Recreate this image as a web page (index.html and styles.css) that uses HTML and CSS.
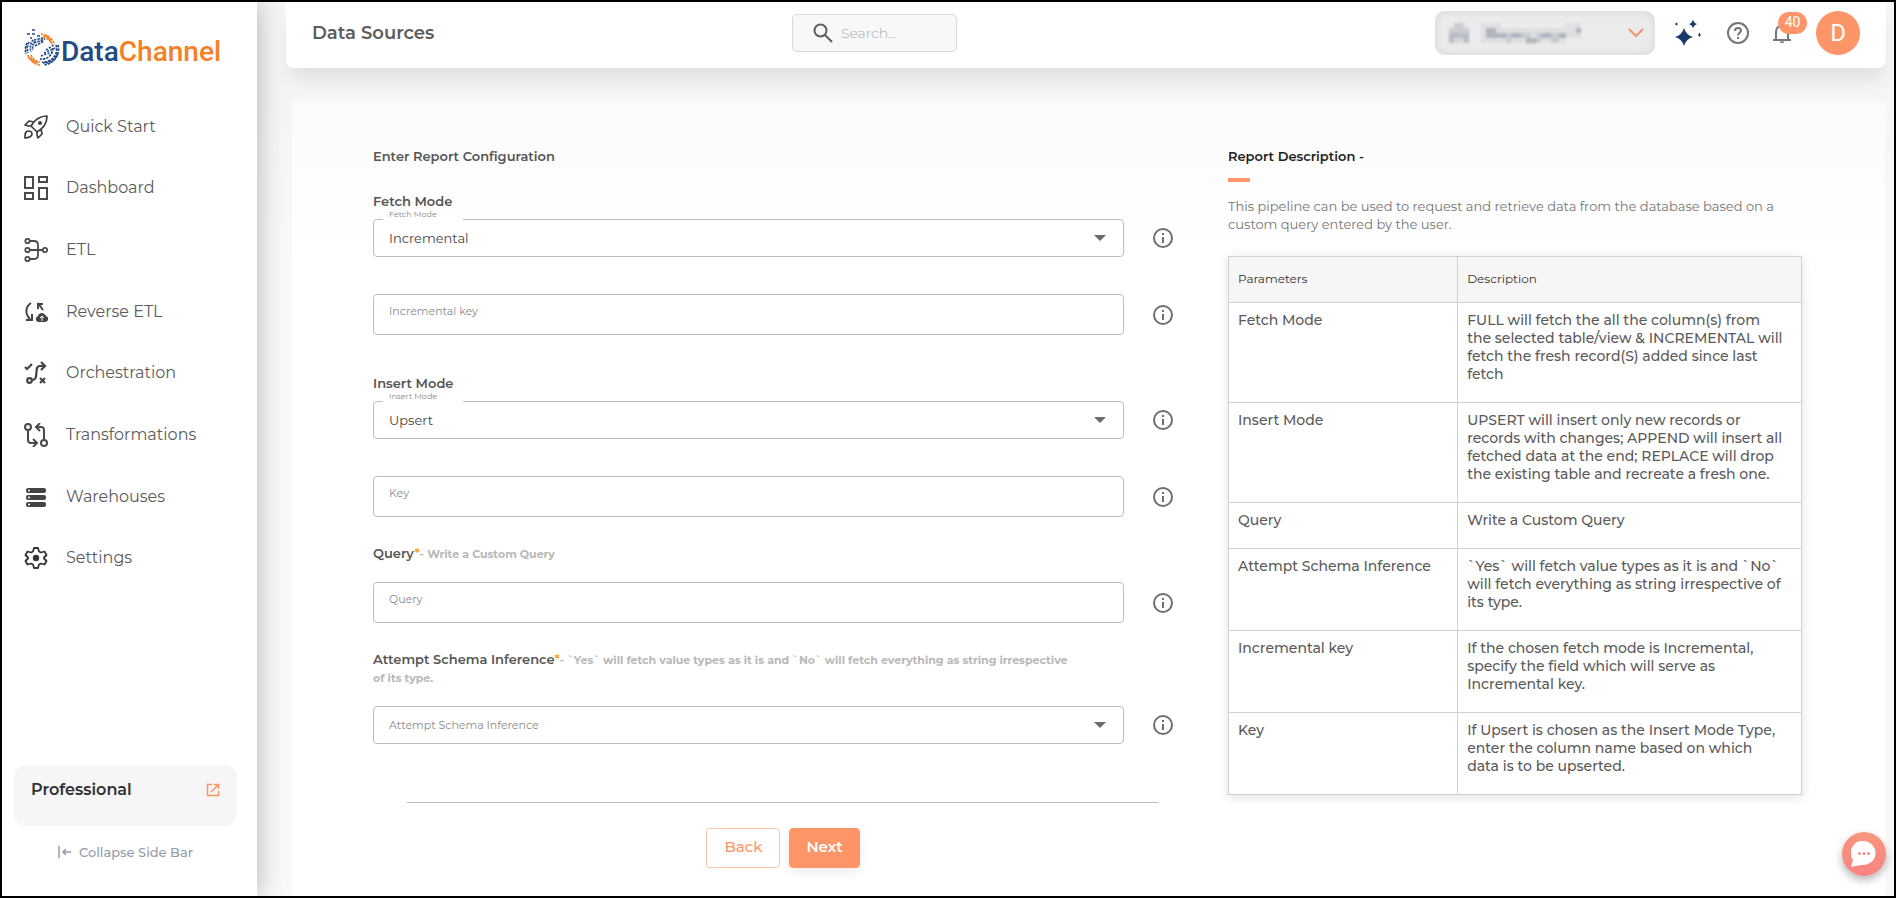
FILE: index.html
```html
<!DOCTYPE html>
<html lang="en">
<head>
<meta charset="utf-8">
<title>DataChannel - Data Sources</title>
<link rel="stylesheet" href="styles.css">
</head>
<body>
<svg class="sprite" aria-hidden="true">
  <symbol id="info" viewBox="0 0 24 24"><path fill="currentColor" d="M11 7h2v2h-2zm0 4h2v6h-2zm1-9a10 10 0 1 0 0 20 10 10 0 0 0 0-20zm0 18a8 8 0 1 1 0-16 8 8 0 0 1 0 16z"/></symbol>
  <symbol id="caret" viewBox="0 0 12 6"><path fill="currentColor" d="M0 0h12L6 6z"/></symbol>
</svg>
<div class="app">
  <aside class="sidebar">
    <a class="logo" href="#" aria-label="DataChannel">
      <svg class="logo-mark" viewBox="0 0 36 40" fill="none">
        <g stroke="#234a86" stroke-width="1.700">
          <path stroke-dasharray="2.500 1" d="M3 15a16 16 0 0 0-1 11M5 14a14 14 0 0 0-1 11"/>
          <path stroke-dasharray="2 1" d="M9 12a13 13 0 0 0-2 12M11 13a10 10 0 0 0-2 9"/>
          <path stroke-dasharray="2.500 1" d="M10 12l9-2M10 15l11-4M11 18l9-5"/>
          <path stroke-dasharray="2.500 1" d="M34 17a16 16 0 0 1-14 20M32 17a13 13 0 0 1-14 17M29 20a11 11 0 0 1-13 11M34 25a15 15 0 0 1-15 10"/>
          <path stroke-dasharray="2 1.500" d="M22 22l9-6M20 25l11-5M17 28l11-4"/>
          <path d="M8 2h3M3 6h3M8 6h3M6 10h2M13 8h3"/>
        </g>
        <g stroke="#f58025" stroke-width="1.700">
          <path stroke-dasharray="2.500 1" d="M17 6a16 16 0 0 1 13 9M19 9a13 13 0 0 1 9 7M22 7l6 9M20 7l8 6"/>
          <path stroke-dasharray="2.500 1" d="M4 27a14 14 0 0 0 12 10M7 27a11 11 0 0 0 9 7M6 30l8 5M4 29l7 6"/>
        </g>
      </svg>
      <span class="logo-text">Data<span class="logo-accent">Channel</span></span>
    </a>
    <nav class="nav">
      <a href="#"><svg viewBox="0 0 24 24" fill="none" stroke="#3d3d3d" stroke-width="1.7" stroke-linejoin="round"><path d="M23 1C16 1 11 4 7 11l6 6c7-4 10-9 10-16zM7 11l-3 0-3-1 4-4 5 1M13 17l0 3 1 3 4-4-1-5M1 23c0-4 0-7 3-7s4 1 4 3-3 4-7 4z"/><circle cx="16" cy="8" r="2" fill="#3d3d3d" stroke="none"/></svg>Quick Start</a>
      <a href="#"><svg viewBox="0 0 24 24" fill="none" stroke="#4a4a4a" stroke-width="2"><path d="M1 1h8v11H1zM15 1h8v5h-8zM15 12h8v11h-8zM1 17h8v6H1z"/></svg>Dashboard</a>
      <a href="#"><svg viewBox="0 0 24 24" fill="none" stroke="#4a4a4a" stroke-width="1.8"><circle cx="3.5" cy="3" r="2.2"/><circle cx="3.5" cy="12" r="2.2"/><circle cx="3.5" cy="21" r="2.2"/><circle cx="21" cy="12" r="2.2"/><path d="M6 3h4q4 0 4 4v10q0 4-4 4H6M6 12h13"/></svg>ETL</a>
      <a href="#"><svg viewBox="0 0 24 24" fill="none" stroke="#444" stroke-width="2"><path d="M7 3C1 7 1 14 6 19M2 20h6v-6M14 9V4h5M14 3l5 7"/><path fill="#444" stroke="none" d="M15 22a3 3 0 0 1-3-4q1-2 2-2c1-4 6-4 8 0q3 1 2 4-1 2-3 2z"/><path stroke="#fff" stroke-width="1" d="M18 21v-5M16 18l2-2 2 2"/></svg>Reverse ETL</a>
      <a href="#"><svg viewBox="0 0 24 24" fill="none" stroke="#444" stroke-width="2.2"><path d="M1 6l2 2 5-5M8 19c8 0 1-14 8-14h4M17 1l4 4-4 4M16 17l5 5M21 17l-5 5"/><circle cx="5.500" cy="19.500" r="2.300"/></svg>Orchestration</a>
      <a href="#"><svg viewBox="0 0 24 24" fill="none" stroke="#4a4a4a" stroke-width="2"><circle cx="4" cy="4" r="3"/><circle cx="20" cy="20" r="3"/><path d="M4 7v10q0 3 3 3h6M9 16l4 4-4 4M20 17V7q0-3-3-3h-5M16 0l-4 4 4 4"/></svg>Transformations</a>
      <a href="#"><svg viewBox="0 0 24 24"><g fill="#444"><rect x="2" y="3" width="20" height="5" rx="2"/><rect x="2" y="10" width="20" height="5" rx="2"/><rect x="2" y="17" width="20" height="5" rx="2"/></g><g fill="#fff"><circle cx="5" cy="5.500" r="1"/><circle cx="5" cy="12.500" r="1"/><circle cx="5" cy="19.500" r="1"/></g></svg>Warehouses</a>
      <a href="#"><svg viewBox="0 0 24 24" fill="none" stroke="#333" stroke-width="1.8" stroke-linejoin="round"><path d="M10 2h4l1 3.500 2 1 3.500-1 2 3.500-2.500 2.500v1l2.500 2.500-2 3.500-3.500-1-2 1-1 3.500h-4l-1-3.500-2-1-3.500 1-2-3.500L4 12.500v-1L1.500 9l2-3.500 3.500 1 2-1z"/><circle cx="12" cy="12" r="3.200" fill="#333" stroke="none"/></svg>Settings</a>
    </nav>
    <div class="sidebar-foot">
      <a class="plan" href="#"><span>Professional</span>
        <svg viewBox="0 0 14 14" fill="none" stroke="#fe9568" stroke-width="1.5"><path d="M6 1.500H1.500v11h11V8M8 1.500h4.500V6M12 2L5 9"/></svg></a>
      <button class="collapse" type="button">
        <svg viewBox="0 0 14 14" fill="none" stroke="#949dab" stroke-width="1.500"><path d="M1 1v12M13 7H5M8 4L5 7l3 3"/></svg>Collapse Side Bar</button>
    </div>
  </aside>

  <main class="main">
    <header class="topbar">
      <h1>Data Sources</h1>
      <label class="search">
        <svg viewBox="0 0 20 20" fill="none" stroke="#5c5c5c" stroke-width="2"><circle cx="7.500" cy="7.500" r="6"/><path d="M12 12l7 7"/></svg>
        <input type="search" placeholder="Search..." aria-label="Search">
      </label>
      <div class="tools">
        <button class="workspace" type="button" aria-label="Workspace">
          <svg class="mosaic" viewBox="0 -2 136 24" aria-hidden="true">
            <g fill="#c9cdd2"><rect x="5" width="10" height="5"/><rect y="5" width="20" height="15"/></g>
            <g fill="#b8bec7"><rect y="10" width="5" height="10"/><rect x="15" y="10" width="5" height="10"/><rect x="5" y="10" width="10" height="5"/></g>
            <rect x="5" y="15" width="10" height="5" fill="#d5d8dd"/>
            <g fill="#dfe0e2"><rect x="32" width="20" height="20"/><rect x="52" y="5" width="65" height="15"/><rect x="117" y="0" width="15" height="15"/><rect x="77" y="20" width="10" height="4"/></g>
            <g fill="#b0b5be"><rect x="37" y="5" width="10" height="10"/><rect x="47" y="10" width="10" height="5"/><rect x="62" y="10" width="10" height="5"/><rect x="77" y="15" width="10" height="5"/><rect x="92" y="10" width="10" height="5"/><rect x="110" y="10" width="7" height="5"/><rect x="127" y="5" width="5" height="5"/></g>
            <g fill="#c8cbd1"><rect x="57" y="10" width="5" height="10"/><rect x="72" y="10" width="10" height="5"/><rect x="87" y="10" width="5" height="10"/><rect x="102" y="10" width="8" height="10"/></g>
          </svg>
          <svg class="chevron" viewBox="0 0 16 10" fill="none" stroke="#f6926b" stroke-width="2"><path d="M1 1l7 7 7-7"/></svg>
        </button>
        <button class="icon-btn sparkle" type="button" aria-label="Assistant">
          <svg viewBox="0 0 26 26" fill="#153a6b"><path d="M9 8q2 7 9 9-7 2-9 9-2-7-9-9 7-2 9-9zM18 0q1 3 4 4-3 1-4 4-1-3-4-4 3-1 4-4zM24.500 12.500l.8 1.700.7.800-.7.700-.8 1.300-.8-1.300-.7-.7.700-.8zM1.500 2.500L3 4 1.500 5.500 0 4z"/></svg></button>
        <button class="icon-btn help" type="button" aria-label="Help">
          <svg viewBox="0 0 22 22" fill="none" stroke="#757575" stroke-width="2"><circle cx="11" cy="11" r="10"/><path d="M8 9q0-3 3-3t3 2.500c0 2-3 2.500-3 5M11 15v2"/></svg></button>
        <button class="icon-btn bell" type="button" aria-label="Notifications">
          <svg viewBox="0 0 18 20" fill="none" stroke="#757575" stroke-width="2"><path d="M0 17h18M3 17V9c0-4 2-6 6-6s6 2 6 6v8M9 3V0"/><path fill="#757575" stroke="none" d="M7 18.500h4a2 2 0 0 1-4 0z"/></svg>
          <span class="badge">40</span></button>
        <button class="avatar" type="button">D</button>
      </div>
    </header>

    <section class="panel">
      <form class="form">
        <h2>Enter Report Configuration</h2>

        <label class="title" for="fetch">Fetch Mode</label>
        <div class="row after-title">
          <div class="field"><span class="float">Fetch Mode</span>
            <select id="fetch"><option>Incremental</option><option>Full</option></select>
            <svg class="caret"><use href="#caret"/></svg></div>
          <svg class="info"><use href="#info"/></svg>
        </div>
        <div class="row stacked">
          <div class="field"><input type="text" placeholder="Incremental key" aria-label="Incremental key"></div>
          <svg class="info"><use href="#info"/></svg>
        </div>

        <label class="title group" for="insert">Insert Mode</label>
        <div class="row after-title">
          <div class="field"><span class="float">Insert Mode</span>
            <select id="insert"><option>Upsert</option><option>Append</option><option>Replace</option></select>
            <svg class="caret"><use href="#caret"/></svg></div>
          <svg class="info"><use href="#info"/></svg>
        </div>
        <div class="row stacked">
          <div class="field"><input type="text" placeholder="Key" aria-label="Key"></div>
          <svg class="info"><use href="#info"/></svg>
        </div>

        <label class="title" for="query">Query<b class="req">*</b><span class="hint">- Write a Custom Query</span></label>
        <div class="row after-hint">
          <div class="field"><input id="query" type="text" placeholder="Query"></div>
          <svg class="info"><use href="#info"/></svg>
        </div>

        <label class="title" for="schema">Attempt Schema Inference<b class="req">*</b><span class="hint">- `Yes` will fetch value types as it is and `No` will fetch everything as string irrespective<br>of its type.</span></label>
        <div class="row after-hint">
          <div class="field">
            <select id="schema" class="empty"><option>Attempt Schema Inference</option><option>Yes</option><option>No</option></select>
            <svg class="caret"><use href="#caret"/></svg></div>
          <svg class="info"><use href="#info"/></svg>
        </div>

        <div class="actions">
          <button class="btn" type="button">Back</button>
          <button class="btn primary" type="submit">Next</button>
        </div>
      </form>

      <aside class="desc">
        <h2>Report Description -</h2>
        <p>This pipeline can be used to request and retrieve data from the database based on a custom query entered by the user.</p>
        <table>
          <thead><tr><th>Parameters</th><th>Description</th></tr></thead>
          <tbody>
            <tr><td>Fetch Mode</td><td>FULL will fetch the all the column(s) from<br>the selected table/view &amp; INCREMENTAL will<br>fetch the fresh record(S) added since last<br>fetch</td></tr>
            <tr><td>Insert Mode</td><td>UPSERT will insert only new records or<br>records with changes; APPEND will insert all<br>fetched data at the end; REPLACE will drop<br>the existing table and recreate a fresh one.</td></tr>
            <tr><td>Query</td><td>Write a Custom Query</td></tr>
            <tr><td>Attempt Schema Inference</td><td>`Yes` will fetch value types as it is and `No`<br>will fetch everything as string irrespective of<br>its type.</td></tr>
            <tr><td>Incremental key</td><td>If the chosen fetch mode is Incremental,<br>specify the field which will serve as<br>Incremental key.</td></tr>
            <tr><td>Key</td><td>If Upsert is chosen as the Insert Mode Type,<br>enter the column name based on which<br>data is to be upserted.</td></tr>
          </tbody>
        </table>
      </aside>
    </section>
  </main>
</div>
<button class="chat" type="button" aria-label="Open chat">
  <svg viewBox="0 0 26 26"><path fill="#fff" d="M13 0a13 12 0 1 1-3 24l-10 2 2-7A12 12 0 0 1 13 0z"/><g fill="#fa8c7a"><circle cx="8.500" cy="12.500" r="1.500"/><circle cx="13" cy="12.500" r="1.500"/><circle cx="17.500" cy="12.500" r="1.500"/></g></svg>
</button>
</body>
</html>
```
FILE: styles.css
```css
* { box-sizing: border-box; }

body {
  margin: 0;
  font-family: "Montserrat", "Inter", sans-serif;
  font-size: 14px;
  line-height: 18px;
  color: #555;
}

button, input, select { font: inherit; color: inherit; }
button { cursor: pointer; padding: 0; border: 0; background: none; }
a { color: inherit; text-decoration: none; }
h1, h2, p { margin: 0; }
svg { display: block; flex: none; }
.sprite { position: absolute; width: 0; height: 0; }

.app {
  display: grid;
  grid-template-columns: 255px 1fr;
  min-height: 100vh;
  border: 2px solid #000;
  background: linear-gradient(#f6f6f7 100px, #f9f9f9 260px);
}

/* Sidebar */
.sidebar {
  display: flex;
  flex-direction: column;
  background: #fff;
  box-shadow: 2px 0 24px rgba(60, 66, 78, .34);
  clip-path: inset(0 -40px 0 0);
}
.logo { display: flex; gap: 1px; padding: 26px 0 0 22px; }
.logo-mark { width: 36px; height: 40px; }
.logo-text {
  padding-top: 6px;
  font: 500 28px/36px Roboto, sans-serif;
  color: #234a86;
}
.logo-accent { color: #f58025; }
.nav {
  display: grid;
  grid-auto-rows: 1fr;
  height: 493px;
  margin-top: 26px;
  padding-left: 22px;
}
.nav a {
  display: flex;
  align-items: center;
  gap: 18px;
  font-size: 16px;
  color: #5c5c5c;
}
.nav svg { width: 24px; height: 24px; }
.sidebar-foot { margin-top: auto; padding: 0 20px 34px 12px; }
.plan {
  display: flex;
  justify-content: space-between;
  height: 61px;
  padding: 16px 17px;
  border-radius: 12px;
  background: #f6f6f6;
  font-size: 16px;
  font-weight: 600;
  color: #303030;
}
.plan svg { width: 14px; height: 14px; margin-top: 2px; }
.collapse {
  display: flex;
  align-items: center;
  gap: 7px;
  margin: 17px auto 0;
  padding-bottom: 1px;
  font-size: 13px;
  font-weight: 500;
  color: #949dab;
}
.collapse svg { width: 14px; height: 14px; }

/* Top bar */
.main {
  display: flex;
  flex-direction: column;
  padding: 0 8px 0 29px;
}
.topbar {
  display: grid;
  grid-template-columns: 31% 165px 1fr;
  align-items: start;
  height: 66px;
  padding: 9px 26px 0;
  margin-bottom: 33px;
  border-radius: 0 0 8px 8px;
  background: #fff;
  box-shadow: 0 16px 18px -4px rgba(100, 90, 75, .14);
}
.topbar h1 { padding-top: 13px; font-size: 18px; font-weight: 600; color: #5c5c5c; }
.search {
  display: flex;
  align-items: center;
  gap: 8px;
  height: 38px;
  margin-top: 3px;
  padding-left: 20px;
  border: 1px solid #d9d9d9;
  border-radius: 5px;
  background: #f8f8f8;
}
.search svg { width: 20px; height: 20px; }
.search input {
  width: 100%;
  min-width: 0;
  padding: 0;
  border: 0;
  outline: 0;
  background: none;
  font-size: 14px;
  font-weight: 300;
}
.search input::placeholder { color: #aaa; }
.tools { display: flex; justify-content: flex-end; align-items: center; height: 44px; }
.workspace {
  display: flex;
  align-items: center;
  justify-content: space-between;
  width: 220px;
  height: 44px;
  padding: 0 11px 0 14px;
  border-radius: 10px;
  background: #ebebeb;
  box-shadow: inset 0 0 10px rgba(0, 0, 0, .09);
}
.mosaic { width: 136px; height: 24px; filter: blur(1px); }
.chevron { width: 16px; height: 10px; }
.sparkle { margin-left: 20px; }
.sparkle svg { width: 26px; height: 26px; }
.help { margin-left: 26px; }
.help svg { width: 22px; height: 22px; }
.bell { position: relative; margin: 0 25px 0 24px; }
.bell svg { width: 18px; height: 20px; }
.badge {
  position: absolute;
  left: 5px;
  top: -11px;
  width: 29px;
  height: 22px;
  border-radius: 11px;
  background: #fe9568;
  font: 14px/20px Roboto, sans-serif;
  color: #fff;
}
.avatar {
  width: 44px;
  height: 44px;
  border-radius: 50%;
  background: #fe9568;
  font: 24px/44px Roboto, sans-serif;
  color: #fff;
}

/* Panel */
.panel {
  flex: 1;
  display: grid;
  grid-template-columns: 800fr 574fr;
  gap: 55px;
  margin: 0 1px 0 6px;
  padding: 46px 83px 28px 81px;
  background: linear-gradient(#fbfbfb, #fff 160px);
}
.form { display: flex; flex-direction: column; }
h2 { font-size: 13px; line-height: 18px; font-weight: 600; }
.title { margin-top: 27px; font-size: 13px; font-weight: 600; }
.title.group { margin-top: 39px; }
.hint { font-size: 11px; line-height: 14px; font-weight: 700; color: #b8b8b8; }
.req { color: #f7a23c; font-weight: 600; }
.row {
  display: grid;
  grid-template-columns: 1fr 21px;
  align-items: center;
  gap: 28px;
}
.after-title { margin-top: 9px; }
.stacked { margin-top: 37px; }
.after-hint { margin-top: 20px; }
.field { position: relative; }
.field select, .field input {
  display: block;
  width: 100%;
  height: 38px;
  padding: 0 15px;
  border: 1px solid #bdbdbd;
  border-radius: 4px;
  outline: 0;
  appearance: none;
  background: #fff;
  font-size: 13px;
  color: #444;
}
.field input { height: 41px; padding-bottom: 7px; font-size: 11px; }
.field input::placeholder { color: #8a8a8a; }
.field select.empty { font-size: 11px; color: #8a8a8a; }
.caret {
  position: absolute;
  right: 18px;
  top: 16px;
  width: 12px;
  height: 6px;
  color: #6b6b6b;
  pointer-events: none;
}
.float {
  position: absolute;
  left: 10px;
  top: -10px;
  width: 80px;
  padding-left: 6px;
  background: linear-gradient(transparent 9px, #fff 9px);
  font-size: 8px;
  line-height: 11px;
  color: #888;
}
.info { justify-self: center; width: 24px; height: 24px; color: #6e6e6e; }
.actions {
  display: flex;
  justify-content: center;
  gap: 9px;
  margin: 58px 14px 0 34px;
  padding-top: 25px;
  border-top: 1px solid #bdbdbd;
}
.btn {
  height: 40px;
  padding: 0 17px 2px;
  border: 1px solid #fec5ad;
  border-radius: 4px;
  font-size: 15px;
  font-weight: 500;
  color: #fe9568;
}
.btn.primary {
  padding: 0 16px 2px;
  border-color: #fe9568;
  background: #fe9568;
  box-shadow: 0 4px 12px rgba(0, 0, 0, .08);
  font-weight: 600;
  color: #fff;
}

/* Description */
.desc h2 { color: #222; }
.desc h2::after {
  content: "";
  display: block;
  width: 22px;
  height: 4px;
  margin-top: 13px;
  background: #fe9568;
}
.desc p { margin-top: 15px; font-size: 13px; color: #757575; }
table {
  width: 100%;
  margin-top: 23px;
  border-collapse: collapse;
  table-layout: fixed;
  background: #fff;
  border: 1px solid #ccc;
  box-shadow: 0 2px 10px rgba(0, 0, 0, .12);
}
th, td {
  padding: 8px 0 19px 9px;
  border: 1px solid #d0d0d0;
  text-align: left;
  vertical-align: top;
  white-space: nowrap;
  font-weight: 500;
  color: #5a5a5a;
}
th {
  width: 60%;
  padding: 13px 0 14px 9px;
  background: #f6f6f6;
  font-size: 12px;
  font-weight: 400;
  color: #333;
}
th:first-child { width: 40%; }

.chat {
  position: fixed;
  right: 10px;
  bottom: 22px;
  display: grid;
  place-items: center;
  width: 44px;
  height: 44px;
  border-radius: 50%;
  background: linear-gradient(#f8967c, #fb8280);
  box-shadow: 0 4px 8px rgba(0, 0, 0, .3);
}
.chat svg { width: 26px; height: 26px; }
```
